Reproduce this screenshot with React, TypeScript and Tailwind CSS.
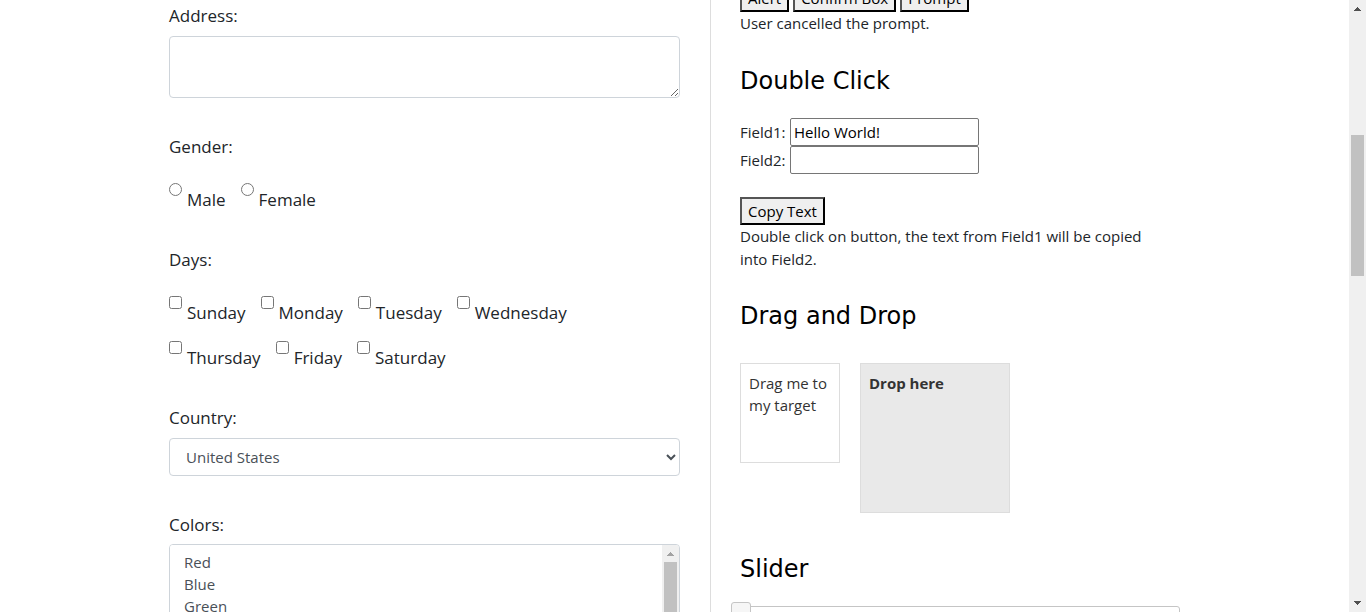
import type { ReactNode } from "react";

const days = ["Sunday", "Monday", "Tuesday", "Wednesday", "Thursday", "Friday", "Saturday"];
const colors = ["Red", "Blue", "Green", "Yellow", "White"];

const fieldLabel = "block text-[17px] leading-6";
const buttonStyle =
  "h-7 border-2 border-t-[#555] border-l-[#555] border-r-black border-b-black bg-[#efefef] px-1.5 leading-6 text-black";
const inputStyle = "h-7 w-[189px] rounded-[2px] border border-[#767676] bg-white px-[3px] text-black";

function Heading({ children }: { children: ReactNode }) {
  return (
    <h2 className="font-['DejaVu_Sans',sans-serif] text-[24px] leading-[30px] text-black">{children}</h2>
  );
}

function Choice({ type, name, label }: { type: "radio" | "checkbox"; name: string; label: string }) {
  return (
    <label className="flex h-[29px] items-start gap-[5px] text-[17px] leading-6">
      <input type={type} name={name} value={label} className="size-[13px] shrink-0" />
      <span className="self-end">{label}</span>
    </label>
  );
}

function Arrow({ down = false, className }: { down?: boolean; className: string }) {
  return (
    <svg viewBox="0 0 7 4" width="7" height="4" className={className} shapeRendering="crispEdges" aria-hidden="true">
      <path d={down ? "M0 0H7V1H6V2H5V3H4V4H3V3H2V2H1V1H0Z" : "M0 4H7V3H6V2H5V1H4V0H3V1H2V2H1V3H0Z"} fill="currentColor" />
    </svg>
  );
}

function PersonForm() {
  return (
    <form className="min-w-0 flex-1 pt-1">
      <div className="mb-[37px]">
        <label htmlFor="address" className={fieldLabel}>Address:</label>
        <textarea
          id="address"
          className="mt-2 block h-[62px] w-full resize-y rounded border border-[#ced4da] px-3 py-1.5"
        />
      </div>

      <fieldset className="mb-9">
        <legend className={fieldLabel}>Gender:</legend>
        <div className="mt-6 flex flex-wrap gap-x-[15px] gap-y-4">
          <Choice type="radio" name="gender" label="Male" />
          <Choice type="radio" name="gender" label="Female" />
        </div>
      </fieldset>

      <fieldset className="mb-9">
        <legend className={fieldLabel}>Days:</legend>
        <div className="mt-6 flex max-w-[420px] flex-wrap gap-x-[15px] gap-y-4">
          {days.map((day) => (
            <Choice key={day} type="checkbox" name="days" label={day} />
          ))}
        </div>
      </fieldset>

      <div className="mb-[37px]">
        <label htmlFor="country" className={fieldLabel}>Country:</label>
        <select
          id="country"
          className="mt-2 block h-[38px] w-full rounded border border-[#ced4da] bg-white pl-3 text-[#495057]"
        >
          <option>United States</option>
          <option>Canada</option>
          <option>United Kingdom</option>
        </select>
      </div>

      <div>
        <label htmlFor="colors" className={fieldLabel}>Colors:</label>
        <div className="mt-[7px] flex h-[98px] overflow-hidden rounded border border-[#ced4da]">
          <select
            id="colors"
            multiple
            className="h-full flex-1 overflow-hidden bg-white py-[7px] pl-3 text-[#495057]"
          >
            {colors.map((color) => (
              <option key={color} className="h-[22px] min-h-0 px-0.5 py-0 leading-[22px]">{color}</option>
            ))}
          </select>
          <div className="flex w-[17px] flex-col items-center bg-[#f0f0f0]" aria-hidden="true">
            <Arrow className="mt-[7px] mb-1.5 shrink-0 text-[#a3a3a3]" />
            <div className="h-[53px] w-[13px] bg-[#c1c1c1]" />
          </div>
        </div>
      </div>
    </form>
  );
}

function Widgets() {
  return (
    <section className="-mt-4 w-[440px] shrink-0">
      <div className="flex gap-1">
        <button type="button" className={buttonStyle}>Alert</button>
        <button type="button" className={buttonStyle}>Confirm Box</button>
        <button type="button" className={buttonStyle}>Prompt</button>
      </div>
      <p className="mb-[31px] leading-[23px]">User cancelled the prompt.</p>

      <Heading>Double Click</Heading>
      <div className="mt-[22px] flex items-center gap-1">
        <label htmlFor="field1" className="w-[46px]">Field1:</label>
        <input id="field1" type="text" defaultValue="Hello World!" className={inputStyle} />
      </div>
      <div className="flex items-center gap-1">
        <label htmlFor="field2" className="w-[46px]">Field2:</label>
        <input id="field2" type="text" className={inputStyle} />
      </div>
      <button type="button" className={`mt-[23px] block ${buttonStyle}`}>Copy Text</button>
      <p className="mb-[30px] max-w-[420px] leading-[23px]">
        Double click on button, the text from Field1 will be copied into Field2.
      </p>

      <Heading>Drag and Drop</Heading>
      <div className="mt-8 mb-[41px] flex items-start gap-5 leading-[22px] text-[#333]">
        <div draggable className="size-[100px] border border-[#ddd] p-2">Drag me to my target</div>
        <div className="size-[150px] border border-[#ddd] bg-[#e9e9e9] p-2 font-bold">Drop here</div>
      </div>

      <Heading>Slider</Heading>
      <div className="relative mt-[22px] h-[13px] rounded-[3px] border border-[#c5c5c5]">
        <input
          type="range"
          defaultValue={0}
          aria-label="Slider"
          className="absolute -top-[5px] -left-2.5 h-5 w-[458px] appearance-none bg-transparent [&::-webkit-slider-thumb]:size-5 [&::-webkit-slider-thumb]:appearance-none [&::-webkit-slider-thumb]:rounded-[3px] [&::-webkit-slider-thumb]:border [&::-webkit-slider-thumb]:border-[#c5c5c5] [&::-webkit-slider-thumb]:bg-[#f6f6f6]"
        />
      </div>
    </section>
  );
}

export default function App() {
  return (
    <div className="flex h-screen overflow-hidden bg-white font-['Open_Sans',sans-serif] text-[15px] text-[#212529]">
      <main className="flex min-w-0 flex-1 justify-center overflow-hidden">
        <div className="flex w-full max-w-[1011px]">
          <PersonForm />
          <div className="mr-[29px] ml-[30px] w-px shrink-0 bg-[#ddd]" />
          <Widgets />
        </div>
      </main>
      <div className="flex w-[17px] shrink-0 flex-col items-center bg-[#f0f0f0]" aria-hidden="true">
        <Arrow className="my-[7px] shrink-0 text-[#505050]" />
        <div className="grow-[117]" />
        <div className="h-[141px] w-[13px] bg-[#c1c1c1]" />
        <div className="grow-[318]" />
        <Arrow down className="my-[7px] shrink-0 text-[#505050]" />
      </div>
    </div>
  );
}
